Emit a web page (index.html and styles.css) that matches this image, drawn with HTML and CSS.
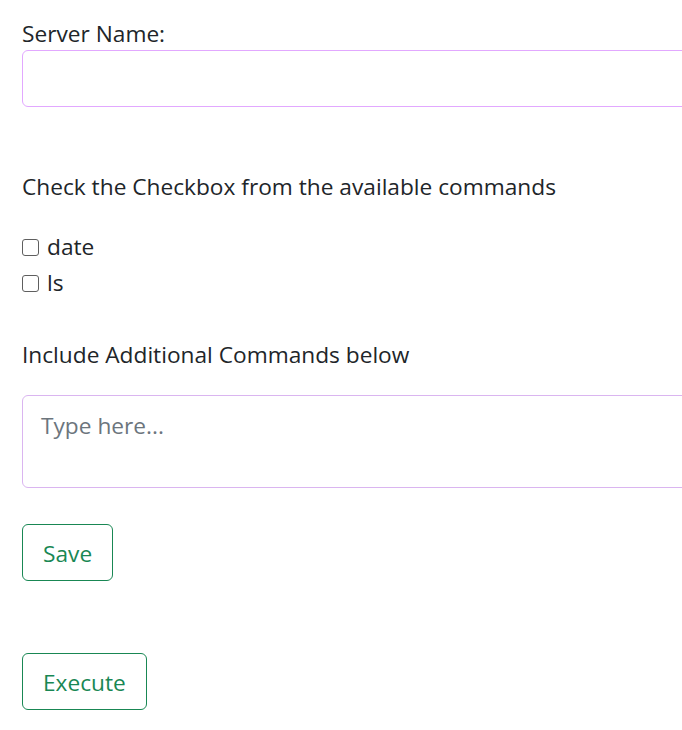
FILE: index.html
```html
<!DOCTYPE html>
<html>
<head>
<meta charset="utf-8">
<link rel="stylesheet" href="styles.css">
</head>
<body>
<form class="form">
  <label class="label label-server" for="server">Server Name:</label>
  <input class="field field-input" id="server" type="text">

  <p class="label label-check">Check the Checkbox from the available commands</p>
  <div class="checks">
    <label class="check"><span class="box"></span>date</label>
    <label class="check"><span class="box"></span>ls</label>
  </div>

  <p class="label label-extra">Include Additional Commands below</p>
  <textarea class="field field-area" placeholder="Type here..."></textarea>

  <button type="button" class="btn btn-save">Save</button>
  <button type="button" class="btn btn-exec">Execute</button>
</form>
</body>
</html>
```
FILE: styles.css
```css
html, body {
  margin: 0;
  padding: 0;
  overflow: hidden;
  background: #fff;
}
body {
  font-family: "Open Sans", "Noto Sans", sans-serif;
  font-size: 22.7px;
  line-height: 30px;
  color: #212529;
}
.form {
  display: flex;
  flex-direction: column;
  align-items: flex-start;
  padding: 19px 0 0 22px;
}
.label {
  display: block;
  margin: 0;
}
.field {
  box-sizing: border-box;
  width: 720px;
  border: 1px solid #e2a8ff;
  border-radius: 6px;
  font: inherit;
  background: #fff;
  outline: none;
}
.field-input {
  height: 57px;
  margin-top: 1px;
}
.label-check {
  margin-top: 65px;
}
.checks {
  margin-top: 27px;
  display: flex;
  flex-direction: column;
}
.check {
  display: flex;
  align-items: center;
  height: 36px;
}
.box {
  box-sizing: border-box;
  width: 17px;
  height: 17px;
  border: 1.5px solid #5f5f5f;
  border-radius: 3px;
  margin-right: 8px;
}
.label-extra {
  margin-top: 39px;
}
.field-area {
  height: 93px;
  margin-top: 25px;
  padding: 15px 18px;
  resize: none;
  border-color: #dab5f0;
  color: #212529;
}
.field-area::placeholder {
  color: #6c757d;
}
.btn {
  box-sizing: border-box;
  font: inherit;
  color: #198754;
  background: #fff;
  border: 1px solid #198754;
  border-radius: 6px;
  height: 57px;
  padding: 3px 20px 0;
}
.btn-save {
  margin-top: 36px;
}
.btn-exec {
  margin-top: 72px;
}
```
